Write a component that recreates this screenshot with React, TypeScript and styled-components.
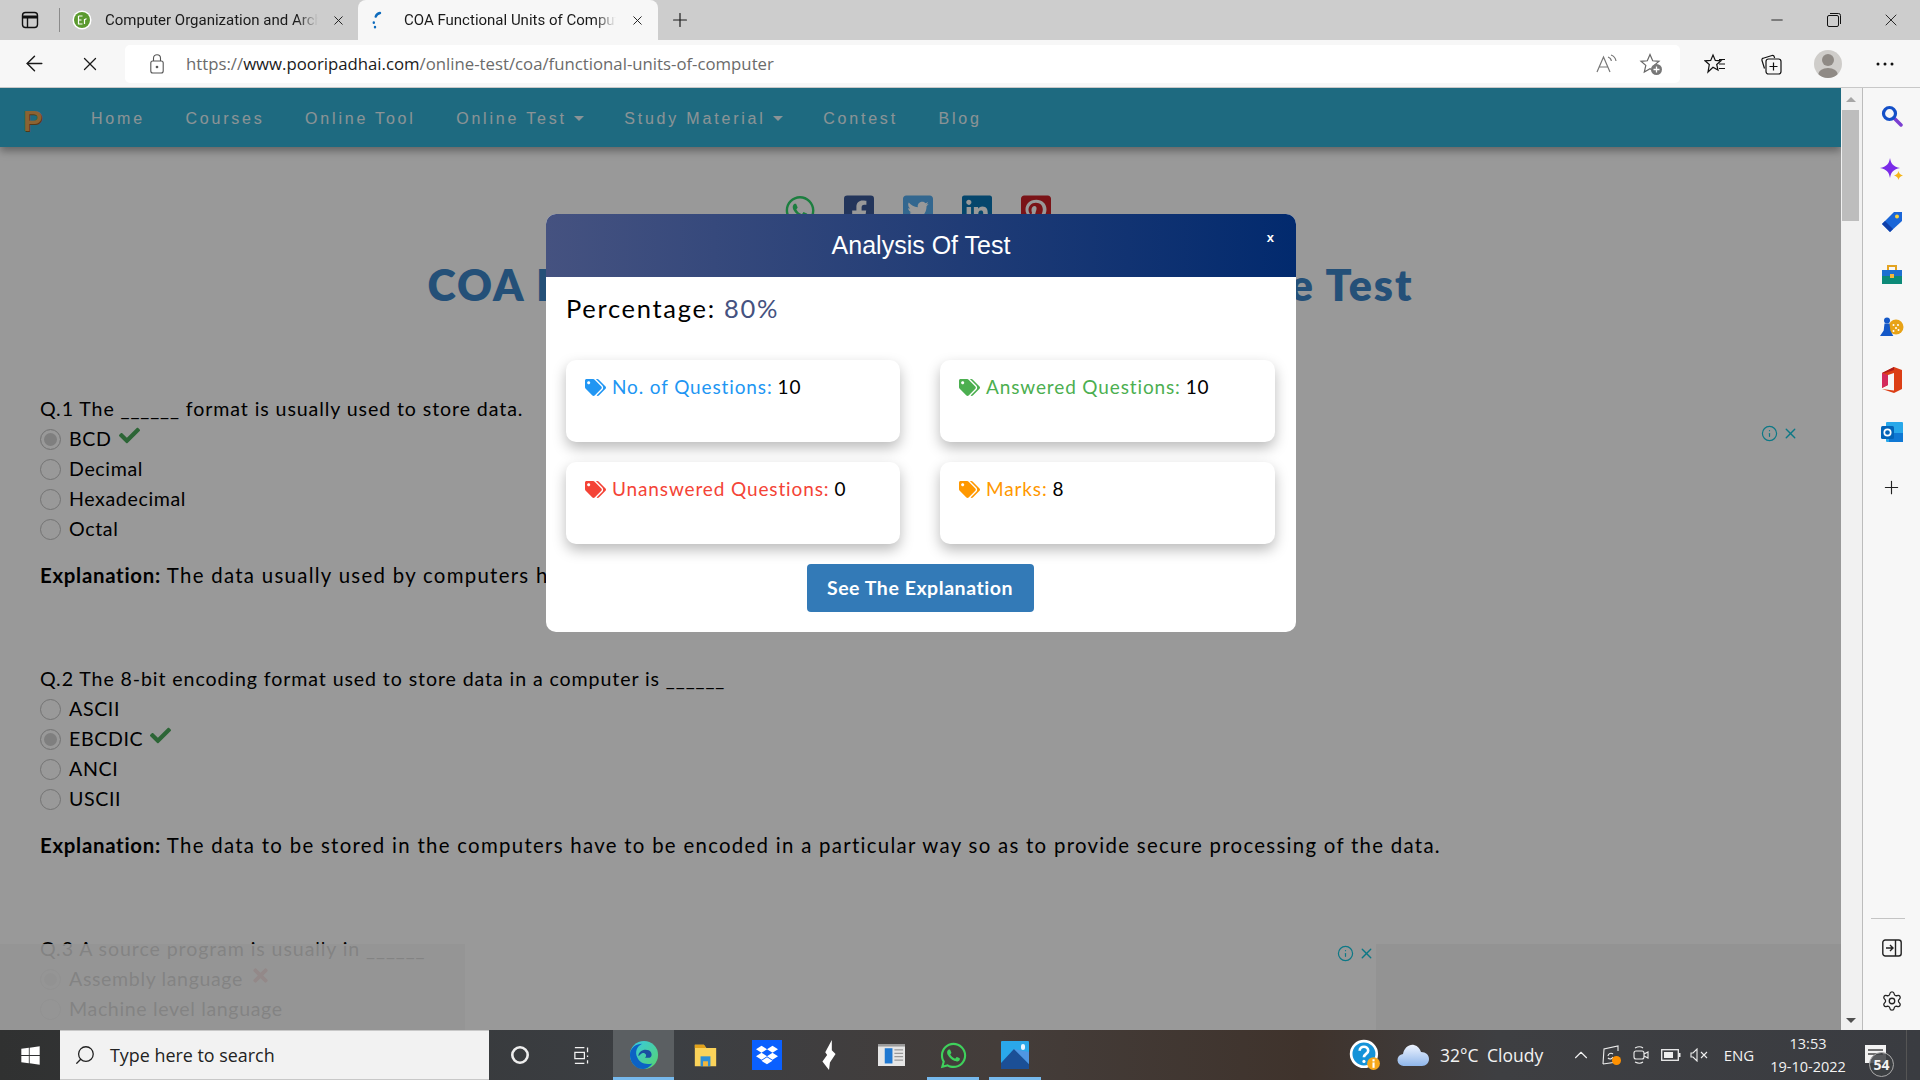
import React from "react";
import styled, { createGlobalStyle } from "styled-components";
import { ArrowLeft, X, Plus, Minus, Info, Settings, ChevronUp, Search } from "lucide-react";
import { FaWhatsapp, FaFacebookSquare, FaTwitterSquare, FaLinkedin, FaPinterestSquare, FaTags, FaCheck, FaTimes, FaDropbox, FaWindows } from "react-icons/fa";

const Global = createGlobalStyle`
  html, body { margin: 0; padding: 0; width: 1920px; height: 1080px; overflow: hidden; }
  * { box-sizing: border-box; }
  #root { width: 1920px; height: 1080px; }
`;
const BODY = `"Lato", "Noto Sans", sans-serif`;
const UI = `"Open Sans", "Noto Sans", sans-serif`;

const Screen = styled.div`display:flex;flex-direction:column;width:1920px;height:1080px;font-family:${UI};background:#f7f7f7;`;
const TabStrip = styled.div`display:flex;height:40px;background:#cdcdcd;flex:none;align-items:stretch;`;
const Slot = styled.div<{ $w: number }>`width:${p => p.$w}px;flex:none;display:flex;align-items:center;justify-content:center;color:#1a1a1a;position:relative;`;
const TabDivider = styled.div`width:1px;height:24px;background:#8b8b8b;align-self:center;flex:none;`;
const Tab = styled.div<{ $active?: boolean; $gap: number; $pad: number }>`
  width:${p => (p.$active ? 300 : 298)}px;flex:none;display:flex;align-items:center;gap:${p => p.$gap}px;padding-left:${p => p.$pad}px;
  background:${p => (p.$active ? "#f7f7f7" : "transparent")};border-radius:${p => (p.$active ? "8px 8px 0 0" : "0")};
  font-family:Roboto,"Open Sans",sans-serif;font-size:15px;color:#1a1a1a;
`;
const TabTitle = styled.span`flex:1;min-width:0;white-space:nowrap;overflow:hidden;margin-top:-1px;line-height:22px;-webkit-mask-image:linear-gradient(90deg,#000 90%,transparent);mask-image:linear-gradient(90deg,#000 90%,transparent);`;
const TabClose = styled.div<{ $w: number; $back: number }>`width:${p => p.$w}px;margin-left:-${p => p.$back}px;flex:none;display:flex;align-items:center;justify-content:center;color:#1a1a1a;`;
const Spacer = styled.div`flex:1;`;
const Toolbar = styled.div`display:flex;height:48px;background:#f7f7f7;flex:none;align-items:center;padding-left:6px;border-bottom:1px solid #c8c8c8;`;
const AddressBar = styled.div`width:1555px;height:38px;margin-left:7px;margin-right:7px;background:#fff;border-radius:5px;display:flex;align-items:center;padding-left:25px;flex:none;`;
const LockSlot = styled.div`width:14px;display:flex;margin-right:22px;flex:none;`;
const Url = styled.div`font-size:16.75px;color:#6b6b6b;white-space:nowrap;flex:1;& b{font-weight:400;color:#1a1a1a;}`;
const AddrIcon = styled.div<{ $w: number }>`width:${p => p.$w}px;display:flex;justify-content:center;flex:none;`;
const Avatar = styled.div`width:28px;height:28px;border-radius:50%;background:#cfcdca;overflow:hidden;display:flex;`;
const Main = styled.div`flex:1;display:flex;min-height:0;`;
const Viewport = styled.div`position:relative;flex:none;width:1841px;overflow:hidden;background:#fff;`;
const Nav = styled.nav`height:59px;background:#32b1d5;display:flex;align-items:center;padding-left:23px;box-shadow:0 4px 8px rgba(0,0,0,.35);font-family:"Liberation Sans",Arial,sans-serif;`;
const Logo = styled.span`font:900 29px "Liberation Sans",Arial,sans-serif;color:#e8a555;width:68px;flex:none;text-shadow:1px 1px 0 #8a5f28;margin-top:7px;`;
const NavLinks = styled.div`display:flex;gap:40.5px;align-items:center;padding-top:2px;`;
const NavLink = styled.span`font-size:16px;letter-spacing:2.8px;color:#e8f6fa;white-space:nowrap;display:flex;align-items:center;`;
const Caret = styled.i`display:inline-block;margin-left:7px;width:0;height:0;border-left:5px solid transparent;border-right:5px solid transparent;border-top:5px solid #e8f6fa;`;
const Content = styled.div`padding:48px 0 0 40px;font-family:${BODY};color:#000;`;
const Socials = styled.div`display:flex;justify-content:center;gap:29px;height:30px;padding-right:6px;margin-left:-40px;`;
const Social = styled.div<{ $c: string }>`width:30px;height:30px;display:flex;align-items:center;justify-content:center;color:${p => p.$c};`;
const Title = styled.h1`margin:36px 0 85px -40px;height:48px;text-align:center;font:800 43px/48px ${BODY};color:#3d85c8;letter-spacing:2px;white-space:nowrap;`;
const Question = styled.section`height:270px;`;
const QLine = styled.div`font-size:19.6px;line-height:30px;letter-spacing:.9px;white-space:nowrap;`;
const Option = styled.div`display:flex;align-items:center;height:29.75px;font-size:19.6px;letter-spacing:.62px;white-space:nowrap;`;
const Radio = styled.span<{ $on?: boolean }>`
  width:21px;height:21px;border-radius:50%;flex:none;margin:2px 8px 0 0;background:#fff;border:1.5px solid #c0c0c0;
  box-shadow:${p => (p.$on ? "inset 0 0 0 3px #fff, inset 0 0 0 12px #d4d4d4" : "none")};
`;
const Mark = styled.span<{ $c: string }>`color:${p => p.$c};display:inline-flex;margin-left:7px;margin-top:-6px;`;
const Explanation = styled.p`margin:17px 0 0;font-size:20.4px;line-height:30px;letter-spacing:1.29px;white-space:nowrap;& b{font-weight:700;letter-spacing:.72px;}`;
const AdStrip = styled.div<{ $left: number; $w: number; $bg: string }>`position:absolute;left:${p => p.$left}px;width:${p => p.$w}px;bottom:0;height:86px;background:${p => p.$bg};`;
const AdMark = styled.div<{ $x: number; $y: number }>`position:absolute;left:${p => p.$x}px;top:${p => p.$y}px;display:flex;gap:4px;color:#14c8e0;`;
const Backdrop = styled.div`position:absolute;inset:0;background:rgba(0,0,0,.4);`;
const Modal = styled.div`position:absolute;left:546px;top:126px;width:750px;height:418px;background:#fff;border-radius:10px;overflow:hidden;`;
const ModalHead = styled.div`height:63px;background:linear-gradient(90deg,#455280,#022a6e);color:#fff;display:flex;align-items:center;justify-content:center;position:relative;font:400 25px "Liberation Sans",Arial,sans-serif;`;
const CloseX = styled.span`position:absolute;right:22px;top:16px;font:700 13px "Liberation Sans",Arial,sans-serif;`;
const ModalBody = styled.div`padding:14px 20px 0;font-family:${BODY};`;
const Percent = styled.div`font-size:25.5px;line-height:34px;letter-spacing:1.7px;color:#000;margin-bottom:35px;& span{color:#455280;}`;
const CardGrid = styled.div`display:grid;grid-template-columns:334px 335px;column-gap:40px;row-gap:20px;`;
const Card = styled.div`height:82px;border-radius:10px;background:#fff;box-shadow:0 6px 14px rgba(0,0,0,.27);padding:14px 19px;display:flex;align-items:flex-start;font-size:19px;line-height:26px;letter-spacing:.87px;color:#000;white-space:nowrap;`;
const CardLabel = styled.span<{ $c: string }>`color:${p => p.$c};display:inline-flex;align-items:center;gap:6px;margin-right:5px;`;
const BtnRow = styled.div`display:flex;justify-content:center;margin:20px 2px 0 0;`;
const Button = styled.button`width:227px;height:48px;border:0;border-radius:4px;background:#337ab7;color:#fff;font:700 19.5px ${BODY};letter-spacing:.55px;padding:0 0 2px;`;
const ScrollBar = styled.div`width:22px;flex:none;background:#f1f1f1;border-right:1px solid #bcbcbc;position:relative;display:flex;flex-direction:column;align-items:center;padding:9px 3px 0 1px;`;
const ArrowUp = styled.i`width:0;height:0;border-left:5px solid transparent;border-right:5px solid transparent;border-bottom:5px solid #a6a6a6;margin-bottom:8px;`;
const ArrowDown = styled.i`width:0;height:0;border-left:5px solid transparent;border-right:5px solid transparent;border-top:5px solid #505050;margin-top:auto;margin-bottom:7px;`;
const Thumb = styled.div`width:17px;height:111px;background:#bdbdbd;`;
const Sidebar = styled.div`width:57px;flex:none;background:#f7f7f7;display:flex;flex-direction:column;align-items:center;`;
const SideIcon = styled.div<{ $h: number }>`height:${p => p.$h}px;width:100%;display:flex;align-items:center;justify-content:center;flex:none;color:#222;`;
const SideRule = styled.div`width:34px;height:1px;background:#c4c4c4;margin-top:auto;margin-bottom:5px;margin-left:-8px;`;
const Taskbar = styled.div`height:50px;flex:none;display:flex;align-items:stretch;background:linear-gradient(90deg,#303131 0,#3c3f43 35%,#443d3a 52%,#3f332c 68%,#3e3f42 78%,#3a3c41 100%);color:#fff;`;
const SearchBox = styled.div`width:429px;flex:none;background:#f2f2f2;display:flex;align-items:center;padding-left:14px;gap:14px;color:#222;font-size:17.9px;border:1px solid #c8c8c8;border-width:1px 0;`;
const TaskApp = styled.div<{ $active?: boolean; $open?: boolean; $w?: number }>`
  width:${p => p.$w ?? 62}px;flex:none;position:relative;display:flex;align-items:center;justify-content:center;
  background:${p => (p.$active ? "#5b5f62" : "transparent")};
  &::after{content:"";display:${p => (p.$open || p.$active ? "block" : "none")};position:absolute;bottom:0;height:3px;background:#76b9ed;left:${p => (p.$active ? 0 : 5)}px;right:${p => (p.$active ? 0 : 5)}px;}
`;
const Tray = styled.div`margin-left:auto;display:flex;align-items:center;`;
const TraySlot = styled.div<{ $w: number }>`width:${p => p.$w}px;height:50px;flex:none;display:flex;align-items:center;justify-content:center;position:relative;font-size:15px;color:#f2f2f2;`;
const Weather = styled.div`width:126px;flex:none;font-size:17.5px;color:#f2f2f2;white-space:nowrap;word-spacing:4px;`;
const Clock = styled.div`width:90px;flex:none;text-align:center;font-size:14.5px;line-height:23px;color:#f2f2f2;`;
const Badge = styled.span`position:absolute;right:4px;bottom:3px;width:25px;height:25px;border-radius:50%;background:rgba(61,63,67,.85);border:1px solid #aaa;color:#f2f2f2;font:700 14px/23px ${UI};text-align:center;`;
const EdgeLine = styled.div`width:14px;height:50px;flex:none;border-left:1px solid #555;margin-left:8px;`;

const TabsIcon = () => <svg width="18" height="18" viewBox="0 0 18 18" fill="none" stroke="#111" strokeWidth="1.4"><rect x="1.5" y="1.5" width="15" height="15" rx="3" /><path d="M1.5 6h15" strokeWidth="3" /><path d="M6.5 6v10" /></svg>;
const Favicon = () => <svg width="20" height="20" viewBox="0 0 20 20"><circle cx="10" cy="10" r="9.5" fill="#fff" /><circle cx="10" cy="10" r="8" fill="#5b9a2f" /><path d="M6.5 6h4M6.5 6v8h4M6.5 10h3M12.5 14V9M12.5 10c.5-1 1.3-1.3 2-1.2" stroke="#fff" strokeWidth="1.2" fill="none" /></svg>;
const Spinner = () => <svg width="20" height="20" viewBox="0 0 20 20" fill="none" stroke="#0f6cbd" strokeWidth="2.4" strokeLinecap="round"><path d="M14 3c-2 .4-3.6 1.6-4.3 3.6" /><path d="M7.8 12.500v.2M9 17v.2" /></svg>;
const LockIcon = () => <svg width="14" height="20" viewBox="0 0 14 20" fill="none" stroke="#555" strokeWidth="1.1"><rect x=".8" y="7" width="12.4" height="12" rx="2" /><path d="M3.500 7V4.200a3.500 3.500 0 0 1 7 0V7" /><circle cx="7" cy="13" r=".8" fill="#555" /></svg>;
const ReadIcon = () => <svg width="22" height="20" viewBox="0 0 22 20" fill="none" stroke="#777" strokeWidth="1.2"><path d="M1 18 7.500 3 14 18M3.500 13h8" /><path d="M12 3c2 .6 3 2 3.400 4M15 1c3 1 4.500 3 5 6" /></svg>;
const StarPlus = () => <svg width="24" height="24" viewBox="0 0 24 24"><path d="M11 2.500l2.700 6.300 6.300.5-4.800 4.100 1.500 6.600L11 16.800 5.300 20l1.500-6.600L2 9.300l6.300-.5z" fill="none" stroke="#666" strokeWidth="1.200" /><circle cx="17.500" cy="17.500" r="5.500" fill="#777" /><path d="M17.500 14.500v6M14.500 17.500h6" stroke="#fff" strokeWidth="1.300" /></svg>;
const FavsIcon = () => <svg width="22" height="22" viewBox="0 0 22 22" fill="none" stroke="#111" strokeWidth="1.200"><path d="M9 2l2.300 5.400 5.700.4-4.300 3.700 1.300 5.600L9 14.200 4 19l1.300-7.400L1 7.800l5.700-.4z" /><path d="M15 6.500h6M15 11h6M15 15.500h6" /></svg>;
const CollIcon = () => <svg width="22" height="22" viewBox="0 0 22 22" fill="none" stroke="#111" strokeWidth="1.200"><path d="M4.500 15.500 2 7.500c-.3-1 .1-2 1.200-2.300L12 2.500c1-.3 2 .3 2.300 1.300l.3 1.200" /><rect x="6" y="6" width="15" height="15" rx="2.500" /><path d="M13.500 9.500v8M9.500 13.500h8" /></svg>;
const RestoreIcon = () => <svg width="14" height="14" viewBox="0 0 14 14" fill="none" stroke="#111" strokeWidth="1"><rect x=".5" y="2.500" width="11" height="11" rx="1.500" /><path d="M3 .5h8.500a2 2 0 0 1 2 2V11" /></svg>;
const Dots = () => <svg width="18" height="4" viewBox="0 0 18 4" fill="#111"><circle cx="2" cy="2" r="1.500" /><circle cx="9" cy="2" r="1.500" /><circle cx="16" cy="2" r="1.500" /></svg>;
const AvatarArt = () => <svg width="28" height="28" viewBox="0 0 28 28"><circle cx="14" cy="10" r="6" fill="#8f8a85" /><ellipse cx="14" cy="25" rx="10" ry="7" fill="#8f8a85" /></svg>;

const SSearch = () => <svg width="22" height="22" viewBox="0 0 22 22" fill="none"><path d="M13 13l7 7" stroke="#7b3fd1" strokeWidth="3.500" strokeLinecap="round" /><circle cx="8.500" cy="8.500" r="6" stroke="#1450c8" strokeWidth="3.200" /></svg>;
const SSpark = () => <svg width="24" height="24" viewBox="0 0 24 24"><path d="M10 0c1 6 3.500 8.500 10 10-6.500 1.500-9 4-10 10-1-6-3.500-8.500-10-10C6.500 8.500 9 6 10 0z" fill="#7a2be8" /><path d="M18.500 13c.5 2.500 1.500 3.500 4.500 4.500-3 1-4 2-4.500 4.500-.5-2.500-1.500-3.500-4.500-4.500 3-1 4-2 4.500-4.500z" fill="#f5b51b" /></svg>;
const STag = () => <svg width="22" height="22" viewBox="0 0 22 22"><path d="M1 13 13 1h8v9L9 21z" fill="#1a66d8" /><path d="M1 13l8 8 3-3-8-8z" fill="#0f3fa8" /><circle cx="16" cy="5.500" r="2" fill="#fbd33b" /></svg>;
const SBox = () => <svg width="22" height="20" viewBox="0 0 22 20"><rect x="7" y="1" width="8" height="5" fill="none" stroke="#e3a320" strokeWidth="2" /><rect x="1" y="5" width="20" height="7" fill="#1d6fd1" /><rect x="1" y="11" width="20" height="8" fill="#0c8a78" /><rect x="9" y="9" width="4" height="4" fill="#f6b73c" /></svg>;
const SChess = () => <svg width="24" height="20" viewBox="0 0 24 20"><circle cx="16" cy="10" r="7.500" fill="#e8a317" /><circle cx="13.500" cy="8" r="1" fill="#fff" /><circle cx="18" cy="8" r="1" fill="#fff" /><circle cx="16" cy="11" r="1" fill="#fff" /><circle cx="13.500" cy="14" r="1" fill="#fff" /><circle cx="18.500" cy="13" r="1" fill="#fff" /><circle cx="7" cy="3.500" r="3" fill="#1458c8" /><path d="M4.500 6.500h5l.8 7 3 5.500H0l3.700-5.500z" fill="#1458c8" /></svg>;
const SOffice = () => <svg width="22" height="26" viewBox="0 0 22 26"><path d="M13 0 21 3v19l-8 4-12-4 12 1.500V6l-6 2v10l-6 3V6z" fill="#dc3e15" /><path d="M7 8v10l-6 3V6z" fill="#d42a5c" /><path d="M13 0 1 6h3l9-3z" fill="#b01c1c" /></svg>;
const SOutlook = () => <svg width="22" height="22" viewBox="0 0 22 22"><rect x="5" y="1" width="17" height="20" rx="1" fill="#28a8ea" /><path d="M8 12h14v9H8z" fill="#0f78d4" /><rect x="0" y="5" width="13" height="13" rx="1.500" fill="#0364b8" /><circle cx="6.500" cy="11.500" r="3.200" fill="none" stroke="#fff" strokeWidth="1.700" /></svg>;
const SPanel = () => <svg width="20" height="18" viewBox="0 0 20 18" fill="none" stroke="#222" strokeWidth="1.400"><rect x=".8" y="1" width="18.400" height="16" rx="2.500" /><path d="M13.500 1v16M4 9h6.500M8 6l3 3-3 3" /></svg>;

const Edge = () => <svg width="30" height="30" viewBox="0 0 32 32"><defs><linearGradient id="eg" x1="0" y1="0" x2="1" y2="1"><stop offset="0" stopColor="#36c9e8" /><stop offset="1" stopColor="#58d46c" /></linearGradient></defs><circle cx="16" cy="16" r="15" fill="url(#eg)" /><path d="M1 16C1 8 8 4 14 4c-6 3-8 9-5 15 2 5 8 8 16 6-3 4-7 6-10 6C7 31 1 24 1 16z" fill="#0c62c4" /><path d="M10 17c0-5 6-8 11-6 4 2 4 7 1 8h-5c3-3 0-6-3-5-2 1-3 3-4 3z" fill="#1a4fa0" /></svg>;
const Folder = () => <svg width="27" height="23" viewBox="0 0 28 28"><path d="M1 1h11l3 4h12v22H1z" fill="#fbd35a" /><path d="M1 1h11l3 4H1z" fill="#e3a21a" /><path d="M8 15h12v12H8z" fill="#2e8fd6" /><rect x="11" y="21" width="6" height="6" fill="#f3b73c" /></svg>;
const DropTile = styled.div`width:30px;height:30px;background:#0a60ff;display:flex;align-items:center;justify-content:center;color:#fff;`;
const Sharp = () => <svg width="16" height="30" viewBox="0 0 16 32" fill="#fff"><path d="M11 0 4 13l2 3-5 7 7 9 1-8 6-9-4-4z" /></svg>;
const AppWin = () => <svg width="27" height="22" viewBox="0 0 28 26" preserveAspectRatio="none"><rect width="28" height="26" fill="#e6e6e6" /><rect y="0" width="28" height="3" fill="#9a9a9a" /><rect x="7" y="5" width="8" height="18" fill="#1f78d1" /><path d="M17 7h9M17 11h9M17 15h9M17 19h9" stroke="#999" strokeWidth="1.500" /></svg>;
const Photos = () => <svg width="28" height="28" viewBox="0 0 28 28"><rect width="28" height="28" rx="1" fill="#2aa8ea" /><path d="M0 22 13 8l15 15v5H0z" fill="#1b4f96" /><path d="M13 8l15 15V11z" fill="#5f8fe0" opacity=".7" /><rect x="20" y="3" width="4" height="6" rx="2" fill="#e8f6ff" /></svg>;
const TaskView = () => <svg width="20" height="19" viewBox="0 0 22 24" fill="none" stroke="#f2f2f2" strokeWidth="1.600"><path d="M2 2h12M2 22h12M2 8h12v8H2zM18 2v6M18 12v2M18 18v4" /></svg>;
const HelpIcon = () => <svg width="32" height="32" viewBox="0 0 30 30"><circle cx="14" cy="14" r="12" fill="#1593d8" stroke="#fff" strokeWidth="2.500" /><path d="M10 11c0-5 8-5 8 0 0 3-4 3-4 6" fill="none" stroke="#fff" strokeWidth="2.500" /><circle cx="14" cy="21" r="1.500" fill="#fff" /><circle cx="23" cy="23" r="6" fill="#f7a81b" /><rect x="22" y="22" width="2" height="5" fill="#fff" /><rect x="22" y="19" width="2" height="2" fill="#fff" /></svg>;
const Cloud = () => <svg width="32" height="24" viewBox="0 0 32 24"><defs><linearGradient id="cg" x1="0" y1="0" x2="0" y2="1"><stop offset="0" stopColor="#eef4ff" /><stop offset="1" stopColor="#8fb6ea" /></linearGradient></defs><path d="M7 23a6 6 0 0 1-1-12C7 5 12 1 17 2c4 1 6 4 7 7 5 0 8 3 8 7 0 4-3 7-7 7z" fill="url(#cg)" /></svg>;
const TrayMeet = () => <svg width="20" height="20" viewBox="0 0 20 20" fill="none" stroke="#eee" strokeWidth="1.100"><path d="M2 19 3 4l14-3v5M2 19l14-2" /><path d="M7 11a3 3 0 0 1 5-2M12 12a3 3 0 0 1-5 1" /><circle cx="15.500" cy="15.500" r="4.500" fill="#ff9100" stroke="none" /></svg>;
const TrayCam = () => <svg width="16" height="20" viewBox="0 0 16 20" fill="none" stroke="#eee" strokeWidth="1.100"><path d="M2 3c3-1.500 6-1.500 8 0M2 17c3 1.500 6 1.500 8 0" /><rect x="1" y="6" width="10" height="8" rx="2" /><path d="M11 9l4-2v6l-4-2" /></svg>;
const TrayBat = () => <svg width="20" height="12" viewBox="0 0 20 12" fill="none"><rect x=".7" y=".7" width="16.600" height="10.600" stroke="#eee" strokeWidth="1.300" /><rect x="3" y="3" width="9" height="6" fill="#eee" /><rect x="18" y="4" width="1.500" height="4" fill="#eee" /></svg>;
const TraySpk = () => <svg width="20" height="14" viewBox="0 0 20 14" fill="none" stroke="#eee" strokeWidth="1.100"><path d="M1 5v4h2l4 4V1L3 5z" /><path d="M11 4l6 6M17 4l-6 6" /></svg>;
const ActionIcon = () => <svg width="21" height="18" viewBox="0 0 21 18" style={{ marginTop: -3 }}><rect width="21" height="18" fill="#f2f2f2" /><path d="M3 5h15M3 9h15" stroke="#444" strokeWidth="1.400" /></svg>;

const options1 = ["BCD", "Decimal", "Hexadecimal", "Octal"];
const options2 = ["ASCII", "EBCDIC", "ANCI", "USCII"];
const navItems: [string, boolean][] = [["Home", false], ["Courses", false], ["Online Tool", false], ["Online Test", true], ["Study Material", true], ["Contest", false], ["Blog", false]];

type OptListProps = { items: string[]; pick: number; mark: "ok" | "bad" };
const OptList = ({ items, pick, mark }: OptListProps) => (
  <>
    {items.map((o, i) => (
      <Option key={o}>
        <Radio $on={i === pick} />
        {o}
        {i === pick && (
          <Mark $c={mark === "ok" ? "#4aa85a" : "#e05555"}>
            {mark === "ok" ? <FaCheck size={21} /> : <FaTimes size={21} />}
          </Mark>
        )}
      </Option>
    ))}
  </>
);

export default function App() {
  return (
    <Screen>
      <Global />
      <TabStrip>
        <Slot $w={59}><TabsIcon /></Slot>
        <TabDivider />
        <Tab $gap={13} $pad={12}>
          <Favicon />
          <TabTitle>Computer Organization and Architecture</TabTitle>
          <TabClose $w={40} $back={13}><X size={15} strokeWidth={1.5} /></TabClose>
        </Tab>
        <Tab $active $gap={18} $pad={8}>
          <Spinner />
          <TabTitle>COA Functional Units of Computer</TabTitle>
          <TabClose $w={42} $back={18}><X size={15} strokeWidth={1.5} /></TabClose>
        </Tab>
        <Slot $w={44}><Plus size={22} strokeWidth={1.3} /></Slot>
        <Spacer />
        <Slot $w={57}><Minus size={18} strokeWidth={1.2} /></Slot>
        <Slot $w={57}><RestoreIcon /></Slot>
        <Slot $w={58}><X size={20} strokeWidth={1.1} /></Slot>
      </TabStrip>
      <Toolbar>
        <Slot $w={56}><ArrowLeft size={25} strokeWidth={1.4} /></Slot>
        <Slot $w={56}><X size={22} strokeWidth={1.4} /></Slot>
        <AddressBar>
          <LockSlot><LockIcon /></LockSlot>
          <Url>https://<b>www.pooripadhai.com</b>/online-test/coa/functional-units-of-computer</Url>
          <AddrIcon $w={44}><ReadIcon /></AddrIcon>
          <AddrIcon $w={44}><StarPlus /></AddrIcon>
          <AddrIcon $w={7} />
        </AddressBar>
        <Slot $w={56}><FavsIcon /></Slot>
        <Slot $w={55}><CollIcon /></Slot>
        <Slot $w={60}><Avatar><AvatarArt /></Avatar></Slot>
        <Slot $w={54}><Dots /></Slot>
      </Toolbar>
      <Main>
        <Viewport>
          <Nav>
            <Logo>P</Logo>
            <NavLinks>
              {navItems.map(([t, c]) => (
                <NavLink key={t}>{t}{c && <Caret />}</NavLink>
              ))}
            </NavLinks>
          </Nav>
          <Content>
            <Socials>
              <Social $c="#2fd36a"><FaWhatsapp size={33} /></Social>
              <Social $c="#3b5998"><FaFacebookSquare size={35} /></Social>
              <Social $c="#55acee"><FaTwitterSquare size={35} /></Social>
              <Social $c="#0976b4"><FaLinkedin size={35} /></Social>
              <Social $c="#cb2027"><FaPinterestSquare size={35} /></Social>
            </Socials>
            <Title>COA Functional Units of Computer Online Test</Title>
            <Question>
              <QLine>Q.1 The ______ format is usually used to store data.</QLine>
              <OptList items={options1} pick={0} mark="ok" />
              <Explanation><b>Explanation:</b> The data usually used by computers have to be stored in a particular format.</Explanation>
            </Question>
            <Question>
              <QLine>Q.2 The 8-bit encoding format used to store data in a computer is ______</QLine>
              <OptList items={options2} pick={1} mark="ok" />
              <Explanation><b>Explanation:</b> The data to be stored in the computers have to be encoded in a particular way so as to provide secure processing of the data.</Explanation>
            </Question>
            <Question>
              <QLine>Q.3 A source program is usually in ______</QLine>
              <OptList items={["Assembly language", "Machine level language"]} pick={0} mark="bad" />
            </Question>
          </Content>
          <AdStrip $left={0} $w={465} $bg="rgba(248,248,248,.88)" />
          <AdStrip $left={1376} $w={465} $bg="rgba(245,245,245,.95)" />
          <AdMark $x={1761} $y={337}><Info size={17} strokeWidth={1.7} /><X size={17} strokeWidth={1.9} /></AdMark>
          <AdMark $x={1337} $y={857}><Info size={17} strokeWidth={1.7} /><X size={17} strokeWidth={1.9} /></AdMark>
          <Backdrop />
          <Modal>
            <ModalHead>Analysis Of Test<CloseX>x</CloseX></ModalHead>
            <ModalBody>
              <Percent>Percentage: <span>80%</span></Percent>
              <CardGrid>
                <Card><CardLabel $c="#2196f3"><FaTags size={21} />No. of Questions:</CardLabel>10</Card>
                <Card><CardLabel $c="#4caf50"><FaTags size={21} />Answered Questions:</CardLabel>10</Card>
                <Card><CardLabel $c="#f44336"><FaTags size={21} />Unanswered Questions:</CardLabel>0</Card>
                <Card><CardLabel $c="#ff9800"><FaTags size={21} />Marks:</CardLabel>8</Card>
              </CardGrid>
              <BtnRow><Button>See The Explanation</Button></BtnRow>
            </ModalBody>
          </Modal>
        </Viewport>
        <ScrollBar>
          <ArrowUp />
          <Thumb />
          <ArrowDown />
        </ScrollBar>
        <Sidebar>
          <SideIcon $h={56}><SSearch /></SideIcon>
          <SideIcon $h={52}><SSpark /></SideIcon>
          <SideIcon $h={52}><STag /></SideIcon>
          <SideIcon $h={53}><SBox /></SideIcon>
          <SideIcon $h={52}><SChess /></SideIcon>
          <SideIcon $h={53}><SOffice /></SideIcon>
          <SideIcon $h={52}><SOutlook /></SideIcon>
          <SideIcon $h={58}><Plus size={21} strokeWidth={1.3} /></SideIcon>
          <SideRule />
          <SideIcon $h={48}><SPanel /></SideIcon>
          <SideIcon $h={58}><Settings size={22} strokeWidth={1.4} /></SideIcon>
        </Sidebar>
      </Main>
      <Taskbar>
        <TaskApp $w={60}><FaWindows size={21} color="#fff" /></TaskApp>
        <SearchBox><Search size={22} strokeWidth={1.4} style={{ transform: "scaleX(-1)" }} />Type here to search</SearchBox>
        <TaskApp $w={61}><svg width="20" height="20" viewBox="0 0 20 20" fill="none" stroke="#eee" strokeWidth="2.600"><circle cx="10" cy="10" r="7.700" /></svg></TaskApp>
        <TaskApp $w={63}><TaskView /></TaskApp>
        <TaskApp $active $w={61}><Edge /></TaskApp>
        <TaskApp><Folder /></TaskApp>
        <TaskApp><DropTile><FaDropbox size={22} /></DropTile></TaskApp>
        <TaskApp><Sharp /></TaskApp>
        <TaskApp><AppWin /></TaskApp>
        <TaskApp $open><FaWhatsapp size={29} color="#3fd15c" /></TaskApp>
        <TaskApp $open><Photos /></TaskApp>
        <Tray>
          <TraySlot $w={42}><HelpIcon /></TraySlot>
          <TraySlot $w={54}><Cloud /></TraySlot>
          <Weather>32°C Cloudy</Weather>
          <TraySlot $w={30}><ChevronUp size={22} strokeWidth={1.2} /></TraySlot>
          <TraySlot $w={30}><TrayMeet /></TraySlot>
          <TraySlot $w={30}><TrayCam /></TraySlot>
          <TraySlot $w={29}><TrayBat /></TraySlot>
          <TraySlot $w={30}><TraySpk /></TraySlot>
          <TraySlot $w={48}>ENG</TraySlot>
          <Clock>13:53<br />19-10-2022</Clock>
          <TraySlot $w={45}><ActionIcon /><Badge>54</Badge></TraySlot>
          <EdgeLine />
        </Tray>
      </Taskbar>
    </Screen>
  );
}
